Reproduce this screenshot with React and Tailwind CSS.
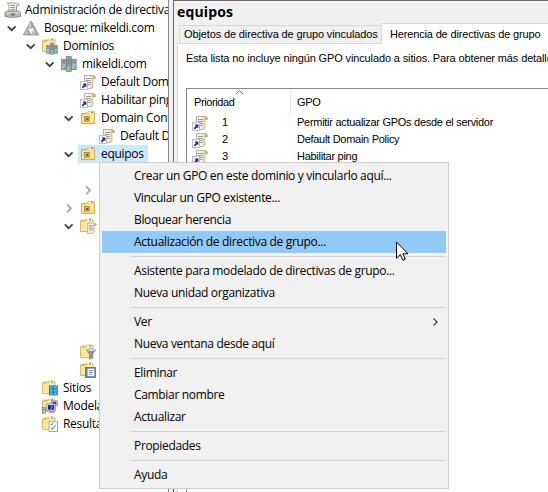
const SEGOE = "font-['Open_Sans','Noto_Sans',sans-serif] text-[12px] tracking-[-0.3px]";

function Chevron({ open, muted }) {
  return (
    <svg width="12" height="12" viewBox="0 0 12 12" fill="none" stroke={muted ? "#a6a6a6" : "#404040"} strokeWidth="1.8" className="shrink-0">
      <path d={open ? "M1.8 4.3 L5.7 8.2 L9.6 4.3" : "M4 2.3 L8 6.3 L4 10.3"} />
    </svg>
  );
}

function Icon({ children }) {
  return (
    <svg width="16" height="16" viewBox="0 0 16 16" className="shrink-0 overflow-visible">
      {children}
    </svg>
  );
}

function ScrollShape() {
  return (
    <g>
      <path d="M4.5 1.5 H13.5 Q15.5 1.5 15.3 4.5 H12.8 V13 Q12.5 14.5 10.5 14.5 H3.5 V11.5 H4.5 Z" fill="#f6f2e4" stroke="#a39a86" strokeWidth=".8" />
      <path d="M10.8 2 H12.6 V12.5 L10.8 14 Z" fill="#e8d89c" />
      <path d="M13 4.3 V2.6 Q14 1.6 15.2 3 V4.3 Z" fill="#d8c48a" stroke="#a39a86" strokeWidth=".5" />
      <path d="M6 4.5 H11 M6 6.5 H10.5 M6 8.5 H11 M7 10.5 H10.5" stroke="#8b8d98" strokeWidth=".9" />
    </g>
  );
}

function GpoLink() {
  return (
    <Icon>
      <ScrollShape />
      <rect x=".5" y="7.5" width="7" height="8" fill="#fff" stroke="#a9aec4" strokeWidth=".8" />
      <path d="M2.4 9.4 H6.4 V13.4 L5.2 12.3 L3 14.5 L1.7 13.2 L3.8 11 Z" fill="#282a87" />
    </Icon>
  );
}

function Console() {
  return (
    <Icon>
      <path d="M2.5 1 H12.5 Q14 1.3 14 3.5 H11.5 V13 H4 V3.5 Z" fill="#eeeeea" stroke="#8d8d88" strokeWidth=".8" />
      <path d="M5.5 3.5 H10 M5.5 5.5 H10 M5.5 7.5 H10" stroke="#888" strokeWidth=".9" />
      <path d="M0 10.5 L2 9 H13.5 L15.5 10.5 V14.5 Q8 16.5 0 14.5 Z" fill="#b9b6a9" stroke="#77756c" strokeWidth=".7" />
      <path d="M1 11 H15" stroke="#e7e5dc" />
      <rect x="6" y="11.5" width="4" height="2" fill="#716d60" />
    </Icon>
  );
}

function Forest() {
  return (
    <Icon>
      <path d="M8 1 L12 8 H4 Z" fill="#d2d2d2" stroke="#8b8b8b" strokeWidth=".8" />
      <path d="M4 8 L8 15 H.4 Z M12 8 L15.6 15 H8 Z" fill="#c8c8c8" stroke="#8b8b8b" strokeWidth=".8" />
      <path d="M4 8 H12 L8 15 Z" fill="#f3f3f3" stroke="#999" strokeWidth=".6" />
      <path d="M8 1 L12 8 H8 Z M12 8 L15.6 15 H12 Z M4 8 L8 15 H4 Z" fill="#909090" opacity=".55" />
    </Icon>
  );
}

function Tower({ x, y, h }) {
  return (
    <g>
      <rect x={x} y={y} width="4.6" height={h} fill="#a9b7bb" stroke="#66757b" strokeWidth=".7" />
      <path d={`M${x + 0.8} ${y + 1.7} h3 M${x + 0.8} ${y + 3.6} h3`} stroke="#4e5e66" strokeWidth=".8" />
      <rect x={x + 2.4} y={y + h - 2.6} width="1.7" height="1.7" fill="#27d43b" />
    </g>
  );
}

function Servers() {
  return (
    <Icon>
      <Tower x={5.6} y={0.6} h={11} />
      <Tower x={0.6} y={3.2} h={10.5} />
      <Tower x={10.6} y={3.2} h={10.5} />
      <Tower x={5.6} y={5.6} h={9.8} />
    </Icon>
  );
}

function FolderShape() {
  return (
    <g>
      <path d="M.5 3 L1.5 2 H6 L7 1 H12 L13 2 V13.5 H.5 Z" fill="#eac66b" stroke="#d3a84a" strokeWidth=".7" />
      <path d="M1 4 H4.5 L5.5 3 H12.6 V13 H1 Z" fill="#fbe6a0" />
      <rect x="7" y="1.2" width="5" height="1.4" fill="#fff" />
      <rect x="9" y="1.2" width="2" height="1.2" fill="#3d9be0" />
    </g>
  );
}

function Domains() {
  return (
    <Icon>
      <FolderShape />
      <g transform="translate(4.2 4.6) scale(.75)">
        <Tower x={5.6} y={0.6} h={11} />
        <Tower x={0.6} y={3.8} h={10.5} />
        <Tower x={10.6} y={3.8} h={10.5} />
        <Tower x={5.6} y={5.6} h={9.8} />
      </g>
    </Icon>
  );
}

function Unit() {
  return (
    <Icon>
      <path d="M1.5 3.5 H6.5 L8 1.7 H14.3 V13.6 H1.5 Z" fill="#f5d98a" stroke="#cfa44c" strokeWidth=".9" />
      <path d="M2 5 H7 L8.3 3.8 H14 V13.2 H2 Z" fill="#fbe49b" />
      <path d="M2 13.3 H14.5 V4" stroke="#d9ac50" fill="none" />
      <rect x="9" y="1.7" width="4.5" height="1.3" fill="#fff" />
      <rect x="11" y="1.7" width="2" height="1.2" fill="#3d9be0" />
      <rect x="4.5" y="6.5" width="4.6" height="4.6" fill="#d5bd60" stroke="#9c8a42" strokeWidth=".9" />
      <rect x="6" y="8" width="2.4" height="2" fill="#746727" />
    </Icon>
  );
}

function GpoFolder() {
  return (
    <Icon>
      <FolderShape />
      <g transform="translate(4.2 4) scale(.78)"><ScrollShape /></g>
    </Icon>
  );
}

function FilterFolder() {
  return (
    <Icon>
      <FolderShape />
      <path d="M6.3 6 H15.6 L12.4 10 V14 L9.6 15.3 V10 Z" fill="#8c9aa8" stroke="#5b6977" strokeWidth=".6" />
      <ellipse cx="11" cy="6.1" rx="4.6" ry="1.3" fill="#dbe3ea" stroke="#6e7b87" strokeWidth=".5" />
    </Icon>
  );
}

function StarterFolder() {
  return (
    <Icon>
      <FolderShape />
      <rect x="5.5" y="5.5" width="10" height="10" fill="#5b7fa8" stroke="#7b5a4d" strokeWidth=".7" />
      <path d="M7.5 6.6 H14.3 V14.2 H7.5 Z" fill="#f7f9fb" />
      <path d="M9 8.6 H13 M9 10.4 H13 M9 12.2 H12" stroke="#4b80b9" strokeWidth=".8" />
    </Icon>
  );
}

function Sites() {
  return (
    <Icon>
      <FolderShape />
      <rect x="7" y="5.5" width="8.8" height="9.9" fill="#1479b8" />
      <path d="M8 6.5 h2.6 v2 H8z M11.8 6.5 h3 v2 h-3z M8 9.6 h2.6 v2 H8z M11.8 9.6 h3 v2 h-3z M8 12.6 h2.6 v1.8 H8z M11.8 12.6 h3 v1.8 h-3z" fill="#5cc5f3" />
    </Icon>
  );
}

function Modeling() {
  return (
    <Icon>
      <FolderShape />
      <rect x=".3" y="9.5" width="3.2" height="5.8" fill="#c3c8bd" stroke="#71766d" strokeWidth=".6" />
      <rect x="1" y="10.6" width="1.7" height="1.4" fill="#44b63c" />
      <rect x="9.5" y="2.8" width="6" height="5" fill="#d6d6e2" stroke="#787a90" strokeWidth=".6" />
      <rect x="10.6" y="3.8" width="3.6" height="3" fill="#262b9e" />
      <rect x="4.8" y="5.8" width="8.6" height="7" fill="#dcdce6" stroke="#787a90" strokeWidth=".6" />
      <rect x="6" y="7" width="6.2" height="4.6" fill="#1c20a8" />
      <path d="M8.5 7.2 L10.5 8.8 L8.8 10.8" stroke="#a9b8f5" fill="none" />
      <path d="M7 14.3 H12.5" stroke="#9a9ba5" strokeWidth="1.5" />
    </Icon>
  );
}

function Results() {
  return (
    <Icon>
      <FolderShape />
      <rect x="7" y="5.8" width="8.4" height="9.6" fill="#fdfdfd" stroke="#8e969c" strokeWidth=".8" />
      <path d="M8.7 8 L9.6 9 L11 7.2 M8.7 11.5 L10.4 13.2 L13.5 9.2" stroke="#2c6aa5" strokeWidth="1" fill="none" />
    </Icon>
  );
}

const depthPad = ["pl-[6px]", "pl-[25px]", "pl-[44px]", "pl-[63px]", "pl-[82px]"];

const tree = [
  { d: 0, s: "open", icon: Forest, t: "Bosque: mikeldi.com" },
  { d: 1, s: "open", icon: Domains, t: "Dominios" },
  { d: 2, s: "open", icon: Servers, t: "mikeldi.com" },
  { d: 3, icon: GpoLink, t: "Default Domain Policy" },
  { d: 3, icon: GpoLink, t: "Habilitar ping" },
  { d: 3, s: "open", icon: Unit, t: "Domain Controllers" },
  { d: 4, icon: GpoLink, t: "Default Domain Controllers" },
  { d: 3, s: "open", icon: Unit, t: "equipos", sel: true },
  {},
  { d: 4, s: "closed" },
  { d: 3, s: "closed", icon: Unit },
  { d: 3, s: "open", icon: GpoFolder },
  {}, {}, {}, {}, {}, {},
  { d: 3, icon: FilterFolder },
  { d: 3, icon: StarterFolder },
  { d: 1, icon: Sites, t: "Sitios" },
  { d: 1, icon: Modeling, t: "Modelado" },
  { d: 1, icon: Results, t: "Resultados" },
];

function TreeRow({ d = 0, s, icon: I, t, sel }) {
  return (
    <div className={`flex h-[18px] shrink-0 items-center ${depthPad[d]}`}>
      <div className="mr-[4px] flex w-3 shrink-0">{s && <Chevron open={s === "open"} muted={s === "closed"} />}</div>
      <div className={`flex h-[18px] items-center gap-[5px] pr-[4px] ${sel ? "-ml-px bg-[#cce8ff] pl-[2px]" : "pl-px"}`}>
        {I && <I />}
        {t && <span className="whitespace-nowrap">{t}</span>}
      </div>
    </div>
  );
}

const menu = [
  ["Crear un GPO en este dominio y vincularlo aquí...", "Vincular un GPO existente...", "Bloquear herencia", "Actualización de directiva de grupo..."],
  ["Asistente para modelado de directivas de grupo...", "Nueva unidad organizativa"],
  ["Ver", "Nueva ventana desde aquí"],
  ["Eliminar", "Cambiar nombre", "Actualizar"],
  ["Propiedades"],
  ["Ayuda"],
];

function ContextMenu() {
  return (
    <div className={`absolute left-[99px] top-[162px] z-20 h-[327px] w-[350px] border border-[#ccc] bg-[#f1f1f1] p-[2px] ${SEGOE} tracking-[-0.33px]`}>
      {menu.map((group, i) => (
        <div key={i}>
          {i > 0 && <div className="flex h-[7px] items-center"><div className="ml-[28px] h-px w-full bg-[#d5d5d5]" /></div>}
          {group.map((t) => (
            <div key={t} className={`flex h-[22px] items-center justify-between pl-[32px] pr-[6px] ${t.startsWith("Actualización") ? "bg-[#91c9f7]" : ""}`}>
              <span className="whitespace-nowrap">{t}</span>
              {t === "Ver" && (
                <svg width="10" height="10" viewBox="0 0 10 10" fill="none" stroke="#444" strokeWidth="1.3"><path d="M3.5 1.5 L7 5 L3.5 8.5" /></svg>
              )}
            </div>
          ))}
        </div>
      ))}
    </div>
  );
}

const gpos = ["Permitir actualizar GPOs desde el servidor", "Default Domain Policy", "Habilitar ping"];

export default function App() {
  return (
    <div className="relative flex h-[492px] w-[548px] overflow-hidden bg-white text-black">
      <div className={`flex w-[168px] shrink-0 flex-col overflow-hidden pt-px ${SEGOE}`}>
        <div className="flex h-[18px] shrink-0 items-center gap-[4px] pl-[5px]">
          <Console />
          <span className="whitespace-nowrap tracking-[-0.27px]">Administración de directivas de grupo</span>
        </div>
        {tree.map((r, i) => <TreeRow key={i} {...r} />)}
      </div>
      <div className="w-[5px] shrink-0 border-l border-[#828790] bg-[#f0f0f0]" />
      <div className="flex min-w-0 grow flex-col border-l border-t border-[#696969] bg-[#f0f0f0] pl-[3px] font-['Liberation_Sans',Arial,sans-serif] text-[11px] tracking-[-0.13px]">
        <div className="h-[22px] shrink-0 whitespace-nowrap font-['Open_Sans',sans-serif] text-[14px] font-bold leading-[22px] tracking-[0.15px]">equipos</div>
        <div className="flex h-[20px] shrink-0 items-end pl-[2px]">
          <div className="flex h-[18px] w-[203px] shrink-0 items-center whitespace-nowrap border border-b-0 border-[#d9d9d9] pl-[4px]">Objetos de directiva de grupo vinculados</div>
          <div className="z-10 -mb-px flex h-[21px] w-[175px] shrink-0 items-center whitespace-nowrap border-t border-[#d9d9d9] bg-white pl-[8px] tracking-[-0.16px]">Herencia de directivas de grupo</div>
        </div>
        <div className="flex grow flex-col overflow-hidden border-l border-t border-[#d9d9d9] bg-white pl-[8px]">
          <div className="h-[44px] shrink-0 whitespace-nowrap pt-[6px] leading-[16px]">Esta lista no incluye ningún GPO vinculado a sitios. Para obtener más detalles</div>
          <div className="flex grow flex-col border-l border-t border-[#828790] tracking-[-0.28px]">
            <div className="flex h-[25px] shrink-0 items-center pt-[2px]">
              <div className="relative flex h-[23px] w-[104px] shrink-0 items-center border-r border-[#e5e5e5] pl-[7px] tracking-[-0.4px]">
                Prioridad
                <svg className="absolute left-[48px] -top-px" width="9" height="5" viewBox="0 0 9 5" fill="none" stroke="#666"><path d="M.8 4.2 L4.5 .8 L8.2 4.2" /></svg>
              </div>
              <span className="pl-[6px]">GPO</span>
            </div>
            {gpos.map((t, i) => (
              <div key={t} className="flex h-[17px] shrink-0 items-center pl-[5px]">
                <GpoLink />
                <span className="w-[89px] shrink-0 pl-[14px]">{i + 1}</span>
                <span className="whitespace-nowrap">{t}</span>
              </div>
            ))}
          </div>
        </div>
      </div>
      <ContextMenu />
      <svg className="absolute left-[396px] top-[241px] z-30" width="13" height="21" viewBox="0 0 13 21">
        <path d="M.5 1 V17.2 L4.4 13.6 L6.9 19.3 L9.3 18.2 L6.9 12.8 H12 Z" fill="#fff" stroke="#000" strokeWidth="1" />
      </svg>
    </div>
  );
}
